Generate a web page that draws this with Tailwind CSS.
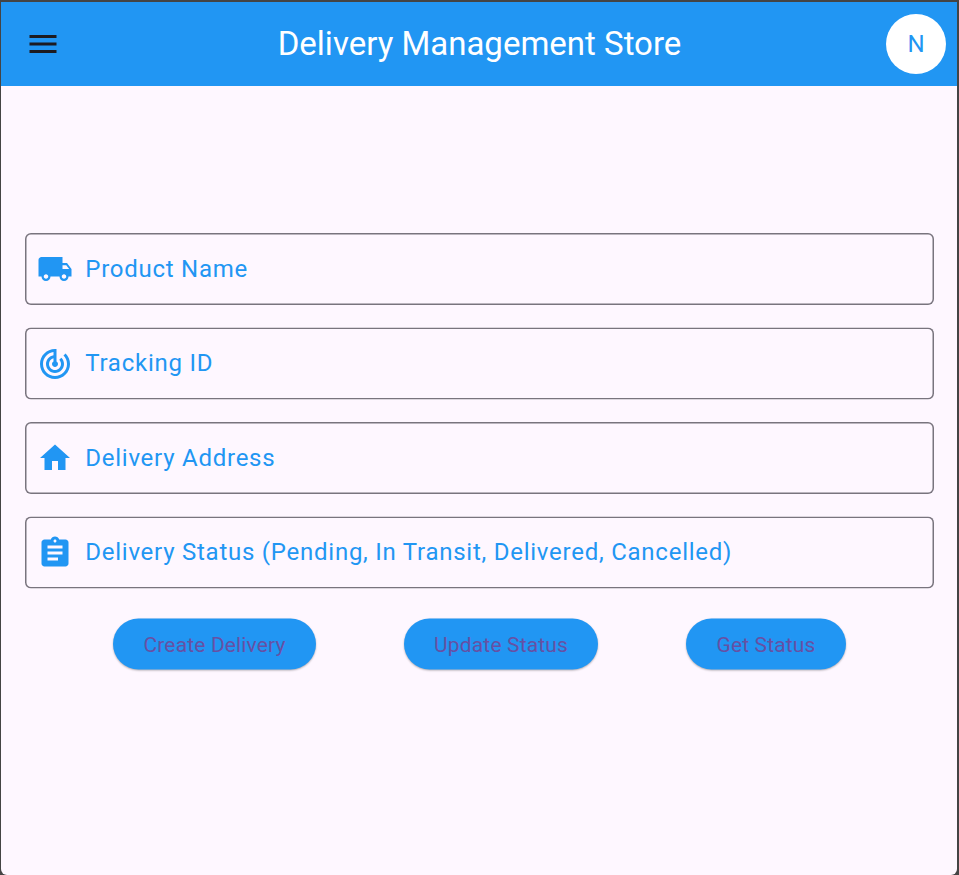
<!DOCTYPE html>
<html lang="en">
<head>
<meta charset="utf-8">
<title>Delivery Management Store</title>
<script src="https://cdn.jsdelivr.net/npm/@tailwindcss/browser@4"></script>
</head>
<body class="h-[875px] overflow-hidden bg-[#444444] pl-px pr-[2px] pt-[2px] font-['Roboto',sans-serif]">
<div class="flex h-[873px] flex-col overflow-hidden rounded-b-[6px] bg-[#fef7ff]">
  <header class="flex h-[84px] shrink-0 items-center justify-between bg-[#2196f3] pl-6 pr-[11px]">
    <button aria-label="Menu" class="w-[60px]"><svg class="size-9" viewBox="0 0 24 24" fill="#1d1b20"><path d="M3 18h18v-2H3v2zm0-5h18v-2H3v2zm0-7v2h18V6H3z"/></svg></button>
    <h1 class="-ml-[12px] whitespace-nowrap text-[33px] leading-[42px] text-white">Delivery Management Store</h1>
    <div class="flex size-[60px] items-center justify-center rounded-full bg-white pl-px text-[24px] tracking-[0.75px] text-[#2196f3]">N</div>
  </header>
  <main class="flex flex-col pl-6 pr-[23px] pt-[147px]">
    <div class="flex flex-col">
      <div class="flex h-[72px] items-center rounded-[6px] pl-3 text-[#2196f3] shadow-[inset_0_0_0_1.5px_#79747e]">
        <svg class="size-9 shrink-0" viewBox="0 0 24 24" fill="currentColor"><path d="M20 8h-3V4H3c-1.100 0-2 .9-2 2v11h2c0 1.660 1.340 3 3 3s3-1.340 3-3h6c0 1.660 1.340 3 3 3s3-1.340 3-3h2v-5l-3-4zM6 18.500c-.83 0-1.500-.67-1.500-1.500s.67-1.500 1.500-1.500 1.500.67 1.500 1.500-.67 1.500-1.500 1.500zm13.500-9l1.960 2.500H17V9.500h2.500zm-1.500 9c-.83 0-1.500-.67-1.500-1.500s.67-1.500 1.500-1.500 1.500.67 1.500 1.500-.67 1.500-1.500 1.500z"/></svg>
        <span class="ml-[12.25px] text-[24px] leading-9 tracking-[0.75px]">Product Name</span>
      </div>
      <div class="mt-[23px] flex h-[72px] -translate-y-[0.5px] items-center rounded-[6px] pl-3 text-[#2196f3] shadow-[inset_0_0_0_1.5px_#79747e]">
        <svg class="size-9 shrink-0 translate-y-[0.5px]" viewBox="0 0 24 24" fill="currentColor"><path d="M19.070 4.930l-1.410 1.410C19.100 7.790 20 9.790 20 12c0 4.420-3.580 8-8 8s-8-3.580-8-8c0-4.080 3.050-7.440 7-7.930v2.020C8.160 6.570 6 9.030 6 12c0 3.310 2.690 6 6 6s6-2.690 6-6c0-1.660-.67-3.160-1.760-4.240l-1.410 1.410C15.550 9.900 16 10.900 16 12c0 2.210-1.790 4-4 4s-4-1.790-4-4c0-1.860 1.280-3.410 3-3.860v2.140c-.6.350-1 .98-1 1.720 0 1.100.9 2 2 2s2-.9 2-2c0-.74-.4-1.380-1-1.720V2h-1C6.480 2 2 6.480 2 12s4.480 10 10 10 10-4.480 10-10c0-2.760-1.120-5.260-2.930-7.070z"/></svg>
        <span class="ml-[12.25px] -translate-y-[0.5px] text-[24px] leading-9 tracking-[0.75px]">Tracking ID</span>
      </div>
      <div class="mt-[22px] flex h-[72px] items-center rounded-[6px] pl-3 text-[#2196f3] shadow-[inset_0_0_0_1.5px_#79747e]">
        <svg class="size-9 shrink-0" viewBox="0 0 24 24" fill="currentColor"><path d="M10 20v-6h4v6h5v-8h3L12 3 2 12h3v8z"/></svg>
        <span class="ml-[12.25px] text-[24px] leading-9 tracking-[0.75px]">Delivery Address</span>
      </div>
      <div class="mt-[23px] flex h-[72px] -translate-y-[0.5px] items-center rounded-[6px] pl-3 text-[#2196f3] shadow-[inset_0_0_0_1.5px_#79747e]">
        <svg class="size-9 shrink-0 translate-y-[0.5px]" viewBox="0 0 24 24" fill="currentColor"><path d="M19 3h-4.180C14.400 1.840 13.300 1 12 1c-1.300 0-2.400.84-2.820 2H5c-1.100 0-2 .9-2 2v14c0 1.100.9 2 2 2h14c1.100 0 2-.9 2-2V5c0-1.100-.9-2-2-2zm-7 0c.55 0 1 .45 1 1s-.45 1-1 1-1-.45-1-1 .45-1 1-1zm2 14H7v-2h7v2zm3-4H7v-2h10v2zm0-4H7V7h10v2z"/></svg>
        <span class="ml-[12.25px] -translate-y-[0.5px] text-[24px] leading-9 tracking-[0.75px]">Delivery Status (Pending, In Transit, Delivered, Cancelled)</span>
      </div>
    </div>
    <div class="mt-[30px] flex -translate-y-[0.5px] justify-evenly text-[21px] leading-[30px] tracking-[0.15px] text-[#6750a4]">
      <button class="h-[51px] rounded-full bg-[#2196f3] px-[30px] shadow-[0_1px_2px_rgba(0,0,0,0.3)]">Create Delivery</button>
      <button class="h-[51px] rounded-full bg-[#2196f3] px-[30px] shadow-[0_1px_2px_rgba(0,0,0,0.3)]">Update Status</button>
      <button class="h-[51px] rounded-full bg-[#2196f3] px-[30px] shadow-[0_1px_2px_rgba(0,0,0,0.3)]">Get Status</button>
    </div>
  </main>
</div>
</body>
</html>
